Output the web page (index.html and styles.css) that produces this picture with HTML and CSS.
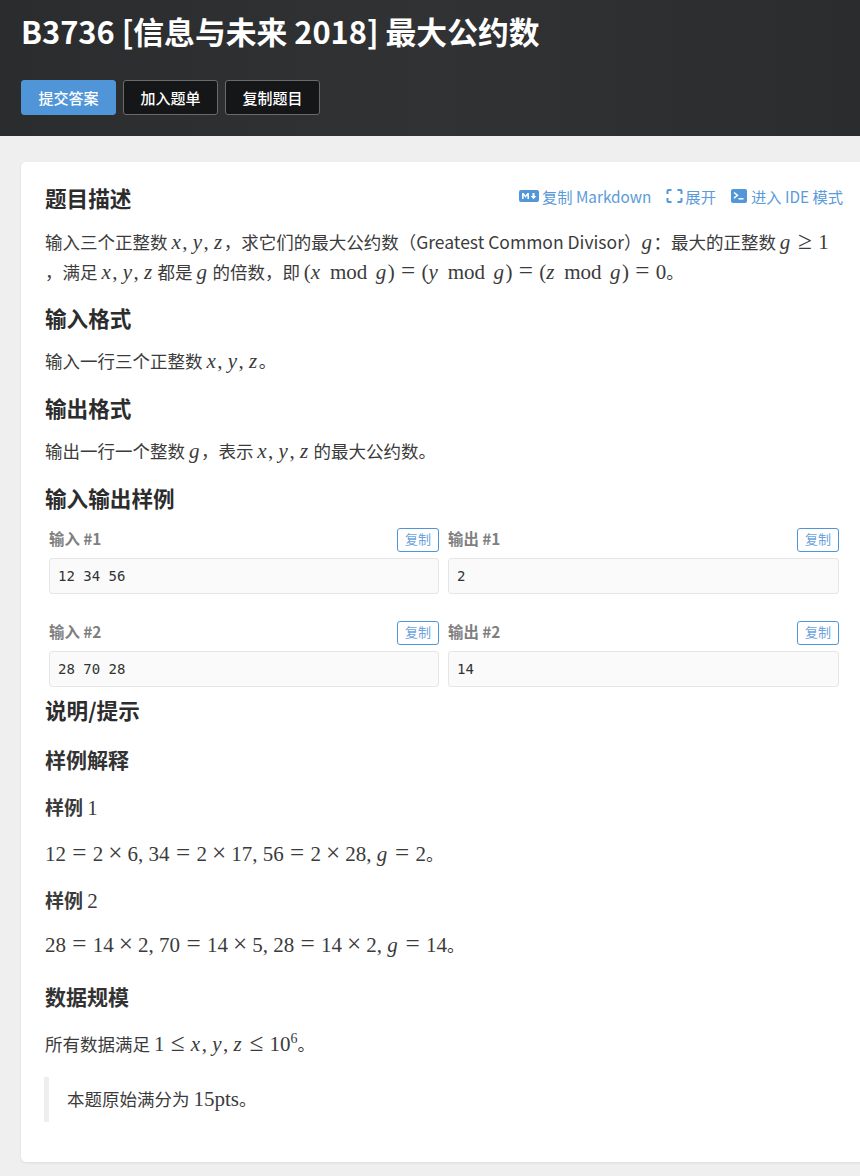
FILE: index.html
```html
<!DOCTYPE html>
<html lang="zh-CN">
<head>
<meta charset="utf-8">
<title>B3736 最大公约数</title>
<link rel="stylesheet" href="styles.css">
</head>
<body>
<header class="hero">
  <h1 class="title">B3736 [信息与未来 2018] 最大公约数</h1>
  <div class="actions">
    <button class="btn btn-primary">提交答案</button>
    <button class="btn">加入题单</button>
    <button class="btn">复制题目</button>
  </div>
</header>
<main class="card">
  <div class="head-row">
    <h2 class="h2 first">题目描述</h2>
    <div class="tools">
      <a class="tool"><svg class="ico-md" viewBox="0 0 20 12"><rect width="20" height="12" rx="2" fill="#5297d8"/><path d="M3 9V3h1.6L6.5 5.4 8.400 3H10v6H8.400V5.500L6.500 7.800 4.600 5.500V9z" fill="#fff"/><path d="M13.500 3h2v3h1.900L14.500 9.300 11.600 6h1.900z" fill="#fff"/></svg>复制 Markdown</a>
      <a class="tool"><svg class="ico-ex" viewBox="0 0 16 14"><path d="M1 5V2a1 1 0 0 1 1-1h3M11 1h3a1 1 0 0 1 1 1v3M15 9v3a1 1 0 0 1-1 1h-3M5 13H2a1 1 0 0 1-1-1V9" fill="none" stroke="#5297d8" stroke-width="2"/></svg>展开</a>
      <a class="tool"><svg class="ico-tm" viewBox="0 0 16 14"><rect width="16" height="14" rx="2" fill="#5297d8"/><path d="M3 3.500 6.500 6.300 3 9.100" fill="none" stroke="#fff" stroke-width="1.500"/><path d="M7.500 9.800h5" stroke="#fff" stroke-width="1.500"/></svg>进入 IDE 模式</a>
    </div>
  </div>
  <p class="p lead">输入三个正整数 <span class="m"><i>x</i><span class="c">,</span><i>y</i><span class="c">,</span><i>z</i></span>，求它们的最大公约数（Greatest Common Divisor）<span class="m"><i>g</i></span>：最大的正整数 <span class="m"><i>g</i><span class="o">≥</span>1</span><br>，满足 <span class="m"><i>x</i><span class="c">,</span><i>y</i><span class="c">,</span><i>z</i></span> 都是 <span class="m"><i>g</i></span> 的倍数，即 <span class="m">(<i>x</i><span class="w">mod</span><i>g</i>)<span class="o">=</span>(<i>y</i><span class="w">mod</span><i>g</i>)<span class="o">=</span>(<i>z</i><span class="w">mod</span><i>g</i>)<span class="o">=</span>0</span>。</p>

  <h2 class="h2 after-lead">输入格式</h2>
  <p class="p">输入一行三个正整数 <span class="m"><i>x</i><span class="c">,</span><i>y</i><span class="c">,</span><i>z</i></span>。</p>

  <h2 class="h2">输出格式</h2>
  <p class="p">输出一行一个整数 <span class="m"><i>g</i></span>，表示 <span class="m"><i>x</i><span class="c">,</span><i>y</i><span class="c">,</span><i>z</i></span> 的最大公约数。</p>

  <h2 class="h2">输入输出样例</h2>
  <div class="samples">
    <div class="sample">
      <div class="sample-head"><span class="label">输入 #1</span><button class="copy">复制</button></div>
      <pre class="code">12 34 56</pre>
    </div>
    <div class="sample">
      <div class="sample-head"><span class="label">输出 #1</span><button class="copy">复制</button></div>
      <pre class="code">2</pre>
    </div>
    <div class="sample">
      <div class="sample-head"><span class="label">输入 #2</span><button class="copy">复制</button></div>
      <pre class="code">28 70 28</pre>
    </div>
    <div class="sample">
      <div class="sample-head"><span class="label">输出 #2</span><button class="copy">复制</button></div>
      <pre class="code">14</pre>
    </div>
  </div>

  <h2 class="h2 hint">说明/提示</h2>
  <h3 class="h3">样例解释</h3>
  <h4 class="h4">样例 <span class="m">1</span></h4>
  <p class="p big-first"><span class="m">12<span class="o">=</span>2<span class="x">×</span>6<span class="c">,</span>34<span class="o">=</span>2<span class="x">×</span>17<span class="c">,</span>56<span class="o">=</span>2<span class="x">×</span>28<span class="c">,</span><i>g</i><span class="o">=</span>2</span>。</p>
  <h4 class="h4">样例 <span class="m">2</span></h4>
  <p class="p big"><span class="m">28<span class="o">=</span>14<span class="x">×</span>2<span class="c">,</span>70<span class="o">=</span>14<span class="x">×</span>5<span class="c">,</span>28<span class="o">=</span>14<span class="x">×</span>2<span class="c">,</span><i>g</i><span class="o">=</span>14</span>。</p>
  <h3 class="h3 scale">数据规模</h3>
  <p class="p big-last">所有数据满足 <span class="m">1<span class="o">≤</span><i>x</i><span class="c">,</span><i>y</i><span class="c">,</span><i>z</i><span class="o">≤</span>10<sup class="sup">6</sup></span>。</p>
  <blockquote class="quote">本题原始满分为 <span class="m">15pts</span>。</blockquote>
</main>
</body>
</html>
```
FILE: styles.css
```css
* { box-sizing: border-box; }
html, body { margin: 0; padding: 0; }
body {
  width: 860px;
  height: 1176px;
  overflow: hidden;
  background: #efefef;
  color: #3b3b3b;
  font-family: "Noto Sans CJK SC", "Noto Sans", sans-serif;
  font-size: 17.500px;
}
.hero {
  height: 136px;
  padding: 9px 21px 0;
  background: linear-gradient(90deg, #2b2c2e, #313234 50%, #2b2c2e);
  color: #fff;
}
.title {
  margin: 0;
  font-size: 30.800px;
  line-height: 44px;
  font-weight: 700;
}
.actions { display: flex; gap: 7px; margin-top: 27px; }
.btn {
  width: 95px;
  height: 35px;
  padding: 0;
  border: 1px solid #6a6a6a;
  border-radius: 3px;
  background: #151617;
  color: #fff;
  font: 500 15px/1 "Noto Sans CJK SC", sans-serif;
}
.btn-primary { border-color: #4f95d8; background: #4f95d8; }
.card {
  height: 1000px;
  margin: 26px -6px 0 21px;
  padding: 20px 0 0 24px;
  background: #fff;
  border-radius: 5px;
  box-shadow: 0 1px 3px rgba(0,0,0,.08);
}
.head-row { display: flex; justify-content: space-between; align-items: flex-start; width: 798px; }
.tools { display: flex; gap: 15px; padding-top: 3px; }
.tool {
  display: flex;
  align-items: center;
  gap: 3px;
  color: #5a9bd9;
  font-size: 15.300px;
  line-height: 22px;
}
.ico-md { width: 20px; height: 12px; }
.ico-ex { width: 17px; height: 14px; margin-right: -1px; }
.ico-tm { width: 16px; height: 14px; margin-right: 1px; }
.h2 { margin: 16px 0 0; color: #2c2c2c; font-size: 21.600px; line-height: 32px; font-weight: 700; }
.h2.first { margin-top: 0; }
.h2.after-lead { margin-top: 15px; }
.h2.hint { margin-top: 6.500px; }
.h3 { margin: 18px 0 0; color: #333; font-size: 21px; line-height: 30px; font-weight: 700; }
.h3.scale { margin-top: 21px; }
.h4 { margin: 20px 0 0; color: #3b3b3b; font-size: 19px; line-height: 26px; font-weight: 700; }
.p + .h4 { margin-top: 18px; }
.p { margin: 12px 0 0; line-height: 30px; }
.p.lead { margin-top: 13px; }
.p.big-first { margin-top: 19px; }
.p.big { margin-top: 17px; }
.p.big-last { margin-top: 18px; }
.m { font-family: "Liberation Serif", serif; font-size: 21px; line-height: 1; white-space: nowrap; }
.m i { padding-right: .07em; }
.h4 .m { font-weight: 400; }
.o { display: inline-block; font-size: 1.200em; line-height: 1; margin: 0 .25em; }
.x { display: inline-block; font-size: 1.200em; line-height: 1; margin: 0 .2em; }
.c { margin-right: .25em; }
.w { margin: 0 .4em; }
.sup { font-size: 14px; line-height: 0; }
.samples {
  display: grid;
  grid-template-columns: 390px 391px;
  column-gap: 9px;
  row-gap: 26.500px;
  margin: 13.500px 0 0 4px;
}
.sample-head { display: flex; justify-content: space-between; align-items: center; height: 24.500px; margin-bottom: 5.500px; }
.label { margin-bottom: 4px; color: #7f7f7f; font-size: 15.400px; font-weight: 700; }
.copy {
  width: 42px;
  height: 24.500px;
  padding: 0 0 2px;
  border: 1px solid #4f95d8;
  border-radius: 3px;
  background: #fff;
  color: #6ba3dc;
  font: 13px/1 "Noto Sans CJK SC", sans-serif;
}
.code {
  margin: 0;
  padding: 7px 8px;
  height: 36.500px;
  background: #fafafa;
  border: 1px solid #e6e6e6;
  border-radius: 3px;
  color: #333;
  font: 14px/20px "DejaVu Sans Mono", monospace;
}
.quote {
  height: 45px;
  margin: 18px 0 0 -1px;
  padding: 7px 0 0 18px;
  border-left: 5px solid #eeeeee;
  line-height: 30px;
}
```
